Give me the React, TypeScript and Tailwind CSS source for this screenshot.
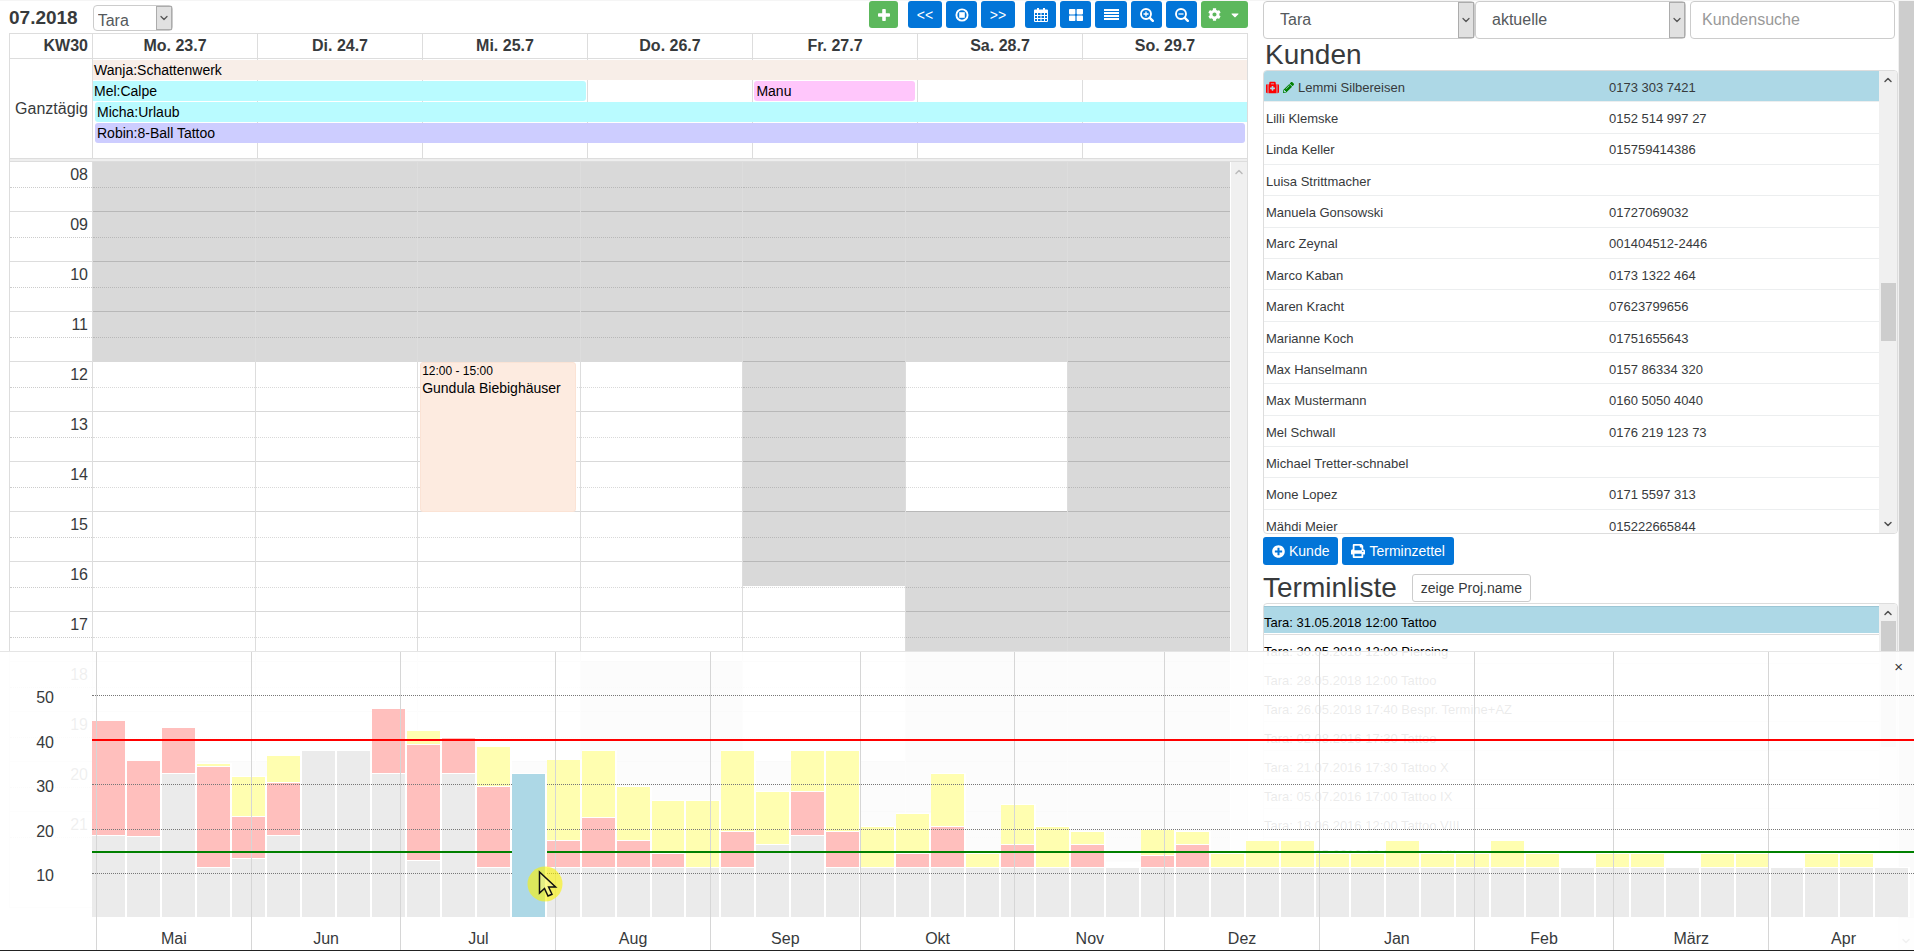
import React from "react";
import { FaCog, FaCaretDown, FaMedkit, FaPencilAlt, FaPlusCircle, FaPrint } from "react-icons/fa";
import { ChevronDown, ChevronUp } from "lucide-react";

const days = ["Mo. 23.7", "Di. 24.7", "Mi. 25.7", "Do. 26.7", "Fr. 27.7", "Sa. 28.7", "So. 29.7"];
const FIRST_HOUR = 8;
const HOUR_PX = 50;
const hours = ["08", "09", "10", "11", "12", "13", "14", "15", "16", "17", "18", "19", "20", "21"];

/* Closed periods of each weekday as [from, to] in hours. */
const closed: [number, number][][] = [
  [[8, 12], [20, 22]],
  [[8, 12], [20, 22]],
  [[8, 12], [20, 22]],
  [[8, 12], [18, 22]],
  [[8, 16.5], [20, 22]],
  [[8, 12], [15, 22]],
  [[8, 22]],
];

const customers: [string, string][] = [
  ["Lemmi Silbereisen", "0173 303 7421"],
  ["Lilli Klemske", "0152 514 997 27"],
  ["Linda Keller", "015759414386"],
  ["Luisa Strittmacher", ""],
  ["Manuela Gonsowski", "01727069032"],
  ["Marc Zeynal", "001404512-2446"],
  ["Marco Kaban", "0173 1322 464"],
  ["Maren Kracht", "07623799656"],
  ["Marianne Koch", "01751655643"],
  ["Max Hanselmann", "0157 86334 320"],
  ["Max Mustermann", "0160 5050 4040"],
  ["Mel Schwall", "0176 219 123 73"],
  ["Michael Tretter-schnabel", ""],
  ["Mone Lopez", "0171 5597 313"],
  ["Mähdi Meier", "015222665844"],
];

const appointments = [
  "Tara: 31.05.2018 12:00 Tattoo",
  "Tara: 30.05.2018 12:00 Piercing",
  "Tara: 28.05.2018 12:00 Tattoo",
  "Tara: 26.05.2018 17:40 Bespr. Termine+AZ",
  "Tara: 02.08.2016 17:30 Tattoo",
  "Tara: 21.07.2016 17:30 Tattoo X",
  "Tara: 05.07.2016 17:00 Tattoo IX",
  "Tara: 18.06.2016 12:00 Tattoo VIII",
  "Tara: 25.05.2016 12:00 Tattoo VII",
];

/* Weekly load: cumulative tops [closed, booked, planned] in pixels. */
const weeks: [number, number, number][] = [
  [82, 197, 0], [81, 157, 0], [144, 190, 0], [50, 151, 154], [59, 101, 141], [82, 135, 162],
  [167, 0, 0], [167, 0, 0], [144, 209, 0], [57, 173, 187], [144, 180, 0], [50, 131, 171],
  [144, 0, 0], [50, 77, 158], [50, 100, 167], [50, 77, 131], [50, 64, 117], [50, 0, 117],
  [50, 86, 167], [73, 0, 126], [82, 126, 167], [50, 86, 167], [50, 0, 91], [50, 64, 104],
  [50, 91, 144], [50, 0, 64], [50, 73, 113], [50, 0, 91], [50, 73, 86], [50, 0, 0],
  [50, 62, 88], [50, 73, 86], [50, 0, 64], [50, 0, 77], [50, 0, 77], [50, 0, 64],
  [50, 0, 64], [50, 0, 77], [50, 0, 64], [50, 0, 64], [50, 0, 77], [50, 0, 64],
  [50, 0, 0], [50, 0, 64], [50, 0, 64], [50, 0, 0], [50, 0, 64], [50, 0, 64],
  [50, 0, 0], [50, 0, 64], [50, 0, 64], [50, 0, 0],
];
const CURRENT_WEEK = 12;

const months: [string, number][] = [
  ["Mai", 31], ["Jun", 30], ["Jul", 31], ["Aug", 31], ["Sep", 30], ["Okt", 31],
  ["Nov", 30], ["Dez", 31], ["Jan", 31], ["Feb", 28], ["März", 31], ["Apr", 30],
];

const ticks = [50, 40, 30, 20, 10];

function SelectBox({ label, value, className, selectClass }: { label: string; value: string; className: string; selectClass: string }) {
  return (
    <div className={"relative " + className}>
      <select aria-label={label} className={"h-full w-full appearance-none rounded border border-[#ccc] bg-white text-base text-[#55595c] " + selectClass}>
        <option>{value}</option>
      </select>
      <span className="pointer-events-none absolute inset-y-px right-px flex w-4 items-center justify-center border border-[#acacac] bg-[#e1e1e1] text-[#555]">
        <ChevronDown size={12} strokeWidth={2.5} className="shrink-0" />
      </span>
    </div>
  );
}

function ToolButton({ label, color = "bg-[#0275d8]", className, children }: { label: string; color?: string; className: string; children: React.ReactNode }) {
  return (
    <button type="button" aria-label={label} className={"flex h-[27px] items-center justify-center rounded-[3px] text-sm text-white " + color + " " + className}>
      {children}
    </button>
  );
}

function PlusIcon() {
  return (
    <svg viewBox="0 0 12 12" className="size-3" fill="currentColor">
      <path d="M5 0h2a.8.8 0 0 1 .8.8v3.400h3.400a.8.8 0 0 1 .8.8v2a.8.8 0 0 1-.8.8H7.800v3.400a.8.8 0 0 1-.8.8H5a.8.8 0 0 1-.8-.8V7.800H.8A.8.8 0 0 1 0 7V5a.8.8 0 0 1 .8-.8h3.400V.8A.8.8 0 0 1 5 0z" />
    </svg>
  );
}

function StopIcon() {
  return (
    <svg viewBox="0 0 14 14" className="size-[14px]" fill="none" stroke="currentColor">
      <circle cx="7" cy="7" r="5.6" strokeWidth="1.9" />
      <rect x="4.2" y="4.2" width="5.6" height="5.6" fill="currentColor" stroke="none" />
    </svg>
  );
}

function CalendarIcon() {
  return (
    <svg viewBox="0 0 14 14" className="size-[14px]" fill="currentColor">
      <path fillRule="evenodd" d="M3 0h2v1.500h4V0h2v1.500h2a1 1 0 0 1 1 1V13a1 1 0 0 1-1 1H1a1 1 0 0 1-1-1V2.500a1 1 0 0 1 1-1h2zM1 5v2h2V5zm3 0v2h2.500V5zm3.500 0v2H10V5zM11 5v2h2V5zM1 8v2h2V8zm3 0v2h2.500V8zm3.500 0v2H10V8zM11 8v2h2V8zM1 11v2h2v-2zm3 0v2h2.500v-2zm3.500 0v2H10v-2zm3.500 0v2h2v-2z" />
    </svg>
  );
}

function TilesIcon() {
  return (
    <svg viewBox="0 0 14 12" className="h-3 w-[14px]" fill="currentColor">
      <rect width="6.4" height="5.4" rx="0.8" />
      <rect x="7.600" width="6.4" height="5.4" rx="0.8" />
      <rect y="6.600" width="6.4" height="5.4" rx="0.8" />
      <rect x="7.600" y="6.600" width="6.4" height="5.4" rx="0.8" />
    </svg>
  );
}

function LinesIcon() {
  return (
    <svg viewBox="0 0 15 11" className="h-[11px] w-[15px]" fill="currentColor">
      <rect width="15" height="2" />
      <rect y="3" width="15" height="2" />
      <rect y="6" width="15" height="2" />
      <rect y="9" width="15" height="2" />
    </svg>
  );
}

function LensIcon({ plus }: { plus?: boolean }) {
  return (
    <svg viewBox="0 0 14 14" className="size-[14px]" fill="none" stroke="currentColor">
      <circle cx="6" cy="6" r="5" strokeWidth="1.9" />
      <path d="M9.800 9.800l3 3" strokeWidth="2.400" strokeLinecap="round" />
      <path d={plus ? "M3.500 6h5M6 3.500v5" : "M3.500 6h5"} strokeWidth="1.300" />
    </svg>
  );
}

function AllDayBar({ className, children }: { className: string; children: React.ReactNode }) {
  return <div className={"h-5 overflow-hidden text-sm leading-5 text-black " + className}>{children}</div>;
}

function Calendar() {
  return (
    <section className="flex min-w-0 flex-col">
      <header className="flex h-8 items-start justify-between">
        <div className="flex items-center gap-[15px] pt-[3px]">
          <h2 className="text-[19px] font-bold leading-[27px]">07.2018</h2>
          <SelectBox label="Mitarbeiter" value="Tara" className="h-[26px] w-20" selectClass="pl-1 pt-[3px]" />
        </div>
        <div className="flex">
          <ToolButton label="Neu" color="bg-[#5cb85c]" className="mr-[10px] w-[29px]"><PlusIcon /></ToolButton>
          <div className="mr-[10px] flex gap-1">
            <ToolButton label="Zurück" className="w-[34px]">&lt;&lt;</ToolButton>
            <ToolButton label="Heute" className="w-[31px]"><StopIcon /></ToolButton>
            <ToolButton label="Weiter" className="w-[34px]">&gt;&gt;</ToolButton>
          </div>
          <div className="flex gap-1">
            <ToolButton label="Monat" className="w-[31px]"><CalendarIcon /></ToolButton>
            <ToolButton label="Woche" className="w-[31px]"><TilesIcon /></ToolButton>
            <ToolButton label="Tag" className="w-8"><LinesIcon /></ToolButton>
            <ToolButton label="Vergrößern" className="w-[31px]"><LensIcon plus /></ToolButton>
            <ToolButton label="Verkleinern" className="w-[31px]"><LensIcon /></ToolButton>
            <ToolButton label="Einstellungen" color="bg-[#5cb85c]" className="w-[47px] gap-2"><FaCog size={13} /><FaCaretDown size={12} /></ToolButton>
          </div>
        </div>
      </header>

      <div className="flex h-[875px] flex-col border border-[#ddd]">
        <div className="flex h-[25px] border-b border-[#ddd] text-base font-bold leading-6">
          <div className="w-[82px] shrink-0 pr-1 text-right">KW30</div>
          <div className="grid flex-1 grid-cols-7 text-center">
            {days.map((d) => <div key={d} className="border-l border-[#ddd]">{d}</div>)}
          </div>
        </div>

        <div className="flex h-[99px]">
          <div className="flex w-[82px] shrink-0 items-center justify-end pr-1 text-base">Ganztägig</div>
          <div className="relative flex-1">
            <div className="grid h-full grid-cols-7">
              {days.map((d) => <div key={d} className="border-l border-[#ddd]" />)}
            </div>
            <div className="absolute inset-0 grid grid-cols-7 content-start gap-y-px pl-px pt-px">
              <AllDayBar className="col-span-7 bg-[#f8eee8] pl-px">Wanja:Schattenwerk</AllDayBar>
              <AllDayBar className="col-span-3 mr-[2px] rounded-r-[3px] bg-[#b9fbff] pl-px">Mel:Calpe</AllDayBar>
              <AllDayBar className="col-start-5 mx-[2px] rounded-[3px] bg-[#ffc6fb] pl-[2px]">Manu</AllDayBar>
              <AllDayBar className="col-span-7 ml-[2px] rounded-l-[3px] bg-[#b9fbff] pl-[2px]">Micha:Urlaub</AllDayBar>
              <AllDayBar className="col-span-7 mx-[2px] rounded-[3px] bg-[#cdcdff] pl-[2px]">Robin:8-Ball Tattoo</AllDayBar>
            </div>
          </div>
        </div>

        <div className="h-1 shrink-0 border-y border-[#ddd] bg-[#eee]" />

        <div className="flex min-h-0 flex-1">
          <div className="flex flex-1 items-start">
            <div className="w-[82px] shrink-0 text-right text-base">
              {hours.map((h, i) => (
                <div key={h} className={i ? "h-[50px] border-t border-[#ddd]" : "h-[49px]"}>
                  <div className="h-[26px] border-b border-dotted border-[#ccc] pr-1 leading-[25px]">{h}</div>
                </div>
              ))}
            </div>
            <div className="grid flex-1 grid-cols-7 border-b border-[#ddd]">
              {days.map((d, i) => (
                <div key={d} className="relative border-l border-[#ddd]">
                  {closed[i].map(([from, to]) => (
                    <div
                      key={from}
                      className="absolute inset-x-0 bg-[#d9d9d9]"
                      style={{ top: Math.max(0, (from - FIRST_HOUR) * HOUR_PX - 1), height: (to - from) * HOUR_PX - (from === FIRST_HOUR ? 1 : 0) }}
                    />
                  ))}
                  {hours.map((h, k) => (
                    <div key={h} className={"relative " + (k ? "h-[50px] border-t border-black/15" : "h-[49px]")}>
                      <div className="h-[26px] border-b border-dotted border-black/15" />
                    </div>
                  ))}
                  {i === 2 && (
                    <div className="absolute left-[2px] right-[4px] top-[200px] h-[150px] rounded-[3px] border border-[#fbe3d5] bg-[#fdebe0] pl-px text-black">
                      <div className="text-xs leading-[17px]">12:00 - 15:00</div>
                      <div className="text-sm leading-4">Gundula Biebighäuser</div>
                    </div>
                  )}
                </div>
              ))}
            </div>
          </div>
          <div className="flex w-[17px] shrink-0 justify-center border-l border-white bg-[#f0f0f0] pt-1 text-[#bbb]">
            <ChevronUp size={12} strokeWidth={3} />
          </div>
        </div>
      </div>
    </section>
  );
}

function Sidebar() {
  return (
    <aside className="flex flex-col">
      <div className="flex h-[38px]">
        <SelectBox label="Mitarbeiter" value="Tara" className="w-[212px]" selectClass="pl-4" />
        <SelectBox label="Filter" value="aktuelle" className="w-[211px]" selectClass="pl-4" />
        <input aria-label="Kundensuche" placeholder="Kundensuche" className="ml-1 w-[205px] rounded border border-[#ccc] px-[11px] text-base placeholder:text-[#999]" />
      </div>
      <h1 className="pl-[2px] text-[28px] leading-[31px]">Kunden</h1>
      <div className="flex h-[464px] overflow-hidden rounded border border-[#ddd]">
        <div className="flex-1 overflow-hidden">
          <table className="h-[470px] w-full border-collapse text-[13px]">
            <tbody>
              {customers.map(([name, phone], i) => (
                <tr key={name} className={"border-b border-[#eceeef] " + (i === 0 ? "bg-[#add8e6]" : "")}>
                  <td className="w-[345px] pb-0 pl-[2px] pt-[3px]">
                    <span className="flex items-center gap-1">
                      {i === 0 && <FaMedkit size={13} className="text-[#f00]" />}
                      {i === 0 && <FaPencilAlt size={11} className="text-[#008000]" />}
                      {name}
                    </span>
                  </td>
                  <td className="pb-0 pt-[3px]">{phone}</td>
                </tr>
              ))}
            </tbody>
          </table>
        </div>
        <div className="flex w-[18px] shrink-0 flex-col items-center justify-between bg-[#f0f0f0] py-[3px] text-[#505050]">
          <ChevronUp size={12} strokeWidth={3} />
          <div className="mb-5 mt-[40px] h-[58px] w-[15px] bg-[#cdcdcd]" />
          <ChevronDown size={12} strokeWidth={3} />
        </div>
      </div>
      <div className="mt-[3px] flex gap-1 text-sm text-white">
        <button type="button" className="flex h-7 items-center gap-1 rounded-[3px] bg-[#0275d8] px-[9px]"><FaPlusCircle size={13} />Kunde</button>
        <button type="button" className="flex h-7 items-center gap-1 rounded-[3px] bg-[#0275d8] px-[9px]"><FaPrint size={14} />Terminzettel</button>
      </div>
      <div className="mt-2 flex items-center gap-[15px]">
        <h1 className="text-[28px] leading-[30px]">Terminliste</h1>
        <button type="button" className="h-7 rounded-[3px] border border-[#ccc] bg-white px-2 text-sm">zeige Proj.name</button>
      </div>
      <div className="flex h-[250px] overflow-hidden rounded border border-[#ddd]">
        <ul className="flex-1 overflow-hidden pt-[2px] text-[13px] text-black">
          {appointments.map((a, i) => (
            <li key={a} className="h-[29px] border-b border-[#ddd]">
              <div className={"h-[27px] leading-[27px] " + (i === 0 ? "border-t border-[#9cc6d5] bg-[#add8e6] pt-[2px]" : "pt-[3px]")}>{a}</div>
            </li>
          ))}
        </ul>
        <div className="flex w-[18px] shrink-0 flex-col items-center bg-[#f0f0f0] pt-[3px] text-[#505050]">
          <ChevronUp size={12} strokeWidth={3} />
          <div className="mt-[2px] h-[126px] w-[15px] bg-[#cdcdcd]" />
        </div>
      </div>
    </aside>
  );
}

function Week({ index, tops }: { index: number; tops: [number, number, number] }) {
  const [base, booked, planned] = tops;
  const current = index === CURRENT_WEEK;
  const mid = booked || base;
  return (
    <div className={"flex shrink-0 flex-col justify-end " + (current ? "relative z-10" : "")} style={{ width: "1.92%" }}>
      {planned > 0 && <div className="border-r-2 border-t border-white bg-[#fffeb0]" style={{ height: planned - mid }} />}
      {booked > 0 && <div className="border-r-2 border-t border-white bg-[#ffbfbd]" style={{ height: booked - base }} />}
      <div className={"border-r-2 border-t border-white " + (current ? "bg-[#add8e6]" : "bg-[#ebebeb]")} style={{ height: base }} />
    </div>
  );
}

function LoadChart() {
  const y = (v: number) => Math.round(v * 4.45);
  return (
    <section className="absolute inset-x-0 bottom-0 flex h-[300px] border-b border-t border-b-[#222] border-t-[#e5e5e5] bg-white/92">
      <div className="relative mb-[33px] w-[92px] shrink-0">
        {ticks.map((t) => (
          <span key={t} className="absolute right-[38px] translate-y-1/2 text-base leading-5" style={{ bottom: y(t) - 4 }}>{t}</span>
        ))}
      </div>
      <div className="relative min-w-0 flex-1 overflow-hidden">
        <div className="absolute inset-x-0 bottom-[33px] top-0 flex items-stretch">
          {weeks.map((w, i) => <Week key={i} index={i} tops={w} />)}
        </div>
        <div className="absolute inset-y-0 left-1 flex w-full items-end">
          {months.map(([name, n]) => (
            <div key={name} className="flex h-full shrink-0 items-end justify-center border-l border-[#d6d6d6] text-base leading-[23px]" style={{ width: ((n / 365) * 100) + "%" }}>{name}</div>
          ))}
        </div>
        <div className="pointer-events-none absolute inset-x-0 bottom-[33px] top-0">
          {ticks.filter((t) => t !== 40).map((t) => (
            <div key={t} className="absolute inset-x-0 border-t border-dotted border-[#777]" style={{ bottom: y(t) - 2 }} />
          ))}
          <div className="absolute inset-x-0 h-[2px] bg-[#f00]" style={{ bottom: y(40) - 2 }} />
          <div className="absolute inset-x-0 h-[2px] bg-[#008000]" style={{ bottom: y(15) - 3 }} />
        </div>
      </div>
      <button type="button" aria-label="Schließen" className="absolute right-[11px] top-[5px] text-[15px] leading-5 text-[#373a3c]">×</button>
      <svg viewBox="0 0 36 36" className="absolute bottom-[48px] left-[527px] z-20 size-9">
        <circle cx="18" cy="18" r="17.500" fill="#fbf400" fillOpacity="0.6" />
        <path d="M12.500 6v21l5-4.500 3.500 7.500 4-1.700-3.400-7.300h7z" fill="#fff" fillOpacity="0.25" stroke="#111" strokeWidth="1.500" />
      </svg>
    </section>
  );
}

export default function App() {
  return (
    <div className="relative flex h-screen overflow-hidden border-t border-[#f5f5f5] bg-white font-['Liberation_Sans',Arial,sans-serif] text-[#373a3c]">
      <main className="grid min-w-0 flex-1 grid-cols-[minmax(0,1fr)_635px] items-start gap-x-[15px] pl-[9px]">
        <Calendar />
        <Sidebar />
      </main>
      <div className="flex w-4 shrink-0 flex-col items-center bg-[#f0f0f0]">
        <div className="w-[15px] flex-1 bg-[#cdcdcd]" />
        <div className="flex h-[33px] items-end pb-1 text-[#505050]"><ChevronDown size={12} strokeWidth={3} /></div>
      </div>
      <LoadChart />
    </div>
  );
}
